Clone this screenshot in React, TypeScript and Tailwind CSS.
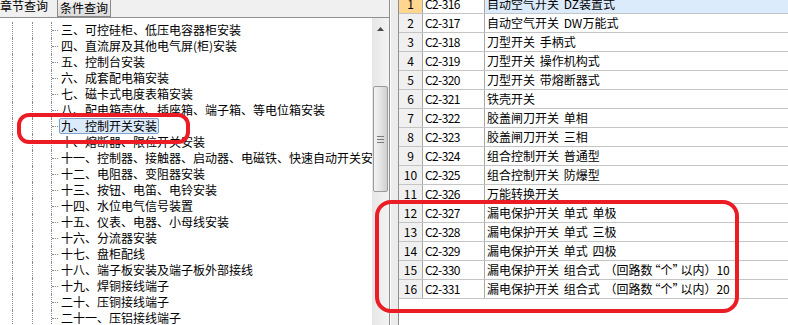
const treeItems = [
  '三、可控硅柜、低压电容器柜安装',
  '四、直流屏及其他电气屏(柜)安装',
  '五、控制台安装',
  '六、成套配电箱安装',
  '七、磁卡式电度表箱安装',
  '八、配电箱壳体、插座箱、端子箱、等电位箱安装',
  '九、控制开关安装',
  '十、熔断器、限位开关安装',
  '十一、控制器、接触器、启动器、电磁铁、快速自动开关安装',
  '十二、电阻器、变阻器安装',
  '十三、按钮、电笛、电铃安装',
  '十四、水位电气信号装置',
  '十五、仪表、电器、小母线安装',
  '十六、分流器安装',
  '十七、盘柜配线',
  '十八、端子板安装及端子板外部接线',
  '十九、焊铜接线端子',
  '二十、压铜接线端子',
  '二十一、压铝接线端子',
];

const rows = [
  ['C2-316', '自动空气开关 DZ装置式'],
  ['C2-317', '自动空气开关 DW万能式'],
  ['C2-318', '刀型开关 手柄式'],
  ['C2-319', '刀型开关 操作机构式'],
  ['C2-320', '刀型开关 带熔断器式'],
  ['C2-321', '铁壳开关'],
  ['C2-322', '胶盖闸刀开关 单相'],
  ['C2-323', '胶盖闸刀开关 三相'],
  ['C2-324', '组合控制开关 普通型'],
  ['C2-325', '组合控制开关 防爆型'],
  ['C2-326', '万能转换开关'],
  ['C2-327', '漏电保护开关 单式 单极'],
  ['C2-328', '漏电保护开关 单式 三极'],
  ['C2-329', '漏电保护开关 单式 四极'],
  ['C2-330', '漏电保护开关 组合式 （回路数“个”以内）10'],
  ['C2-331', '漏电保护开关 组合式 （回路数“个”以内）20'],
];

const SELECTED = 6;

// 引号在 CJK 字体里是全角，收窄一点
function Name({ text }: { text: string }) {
  const parts = text.split(/([“”])/);
  return (
    <span>
      {parts.map((p, i) =>
        p === '“' ? (
          <span key={i} className="-ml-[4px]">“</span>
        ) : p === '”' ? (
          <span key={i} className="-mr-[4px]">”</span>
        ) : (
          p
        ),
      )}
    </span>
  );
}

function TreeRow({ label, selected }: { label: string; selected: boolean }) {
  return (
    <div className="flex h-[16px] items-center">
      <div className="w-[12px] shrink-0" />
      <div className="h-full w-[20px] shrink-0 border-l border-dotted border-[#8a8a8a]" />
      <div className="h-full w-[19px] shrink-0 border-l border-dotted border-[#8a8a8a]" />
      <div className="flex h-full w-[8px] shrink-0 items-center border-l border-dotted border-[#8a8a8a]">
        <div className="w-[6px] border-t border-dotted border-[#8a8a8a]" />
      </div>
      <span
        className={`flex h-[16px] items-center whitespace-nowrap rounded-[2px] border px-[1px] leading-none ${
          selected ? 'border-[#7da2ce] bg-[#dcebfc]' : 'border-transparent'
        }`}
      >
        {label}
      </span>
    </div>
  );
}

function Scrollbar() {
  return (
    <div className="flex w-[17px] shrink-0 flex-col bg-gradient-to-r from-[#e6e6e6] to-[#f4f4f4] pt-[2px]">
      {/* up arrow */}
      <div className="flex h-[17px] items-center justify-center">
        <svg width="7" height="4" viewBox="0 0 7 4">
          <path d="M3.5 0L7 4H0Z" fill="#4a4a4a" />
        </svg>
      </div>
      <div className="h-[49px]" />
      {/* thumb */}
      <div className="mx-[1px] flex h-[106px] flex-col items-center justify-center gap-[2px] rounded-[2px] border border-[#9b9b9b] bg-gradient-to-r from-[#f3f3f3] via-[#e4e4e4] to-[#cfcfcf]">
        <div className="h-px w-[7px] bg-[#7a7a7a]" />
        <div className="h-px w-[7px] bg-[#7a7a7a]" />
        <div className="h-px w-[7px] bg-[#7a7a7a]" />
      </div>
    </div>
  );
}

export default function App() {
  return (
    <div
      className="relative flex h-[325px] w-[788px] overflow-hidden bg-white text-[12px] text-black"
      style={{ fontFamily: '"Noto Sans CJK SC", "Liberation Sans", sans-serif' }}
    >
      {/* left panel */}
      <div className="flex w-[390px] shrink-0 flex-col border-r border-[#8f8f8f] bg-[#f0f0f0]">
        <div className="flex h-[18px] shrink-0 items-start border-b border-[#8f8f8f]">
          <div className="-mt-[1px] w-[54px] leading-[13px]">章节查询</div>
          <div className="ml-[3px] h-[17px] border border-t-0 border-[#8a8a8a] bg-gradient-to-b from-[#f2f2f2] to-[#dcdcdc] px-[2px] pt-[2px] leading-[12px]">
            条件查询
          </div>
        </div>
        <div className="flex min-h-0 flex-1">
          <div className="min-w-0 flex-1 overflow-hidden bg-white pt-[4px]">
            {treeItems.map((t, i) => (
              <TreeRow key={t} label={t} selected={i === SELECTED} />
            ))}
          </div>
          <Scrollbar />
        </div>
      </div>

      {/* splitter */}
      <div className="w-[9px] shrink-0 border-l border-r border-l-white border-r-[#8f8f8f] bg-[#ececec]" />

      {/* right table */}
      <div className="min-w-0 flex-1 overflow-hidden bg-white">
        <div className="-mt-[5px]">
          {rows.map(([code, name], i) => (
            <div key={code} className="flex h-[19px] border-b border-[#c4c4c4]">
              <div
                className={`flex w-[24px] shrink-0 items-center justify-center border-r border-[#a8a8a8] ${
                  i === 0 ? 'bg-[#ffd68f]' : 'bg-[#f0f0f0]'
                }`}
              >
                {i + 1}
              </div>
              <div className="flex w-[62px] shrink-0 items-center border-r border-[#a8a8a8] pl-[2px] tracking-[-0.6px]">
                {code}
              </div>
              <div
                className={`flex flex-1 items-center whitespace-pre pl-[2px] [word-spacing:2px] ${
                  i === 0 ? 'bg-[#dcebfb]' : ''
                }`}
              >
                <Name text={name} />
              </div>
            </div>
          ))}
        </div>
      </div>

      {/* red annotations */}
      <div className="pointer-events-none absolute left-[17px] top-[113px] h-[31px] w-[173px] rounded-[12px] border-4 border-[#ec1c24]" />
      <div className="pointer-events-none absolute left-[375px] top-[200px] h-[113px] w-[364px] rounded-[16px] border-4 border-[#ec1c24]" />
    </div>
  );
}
